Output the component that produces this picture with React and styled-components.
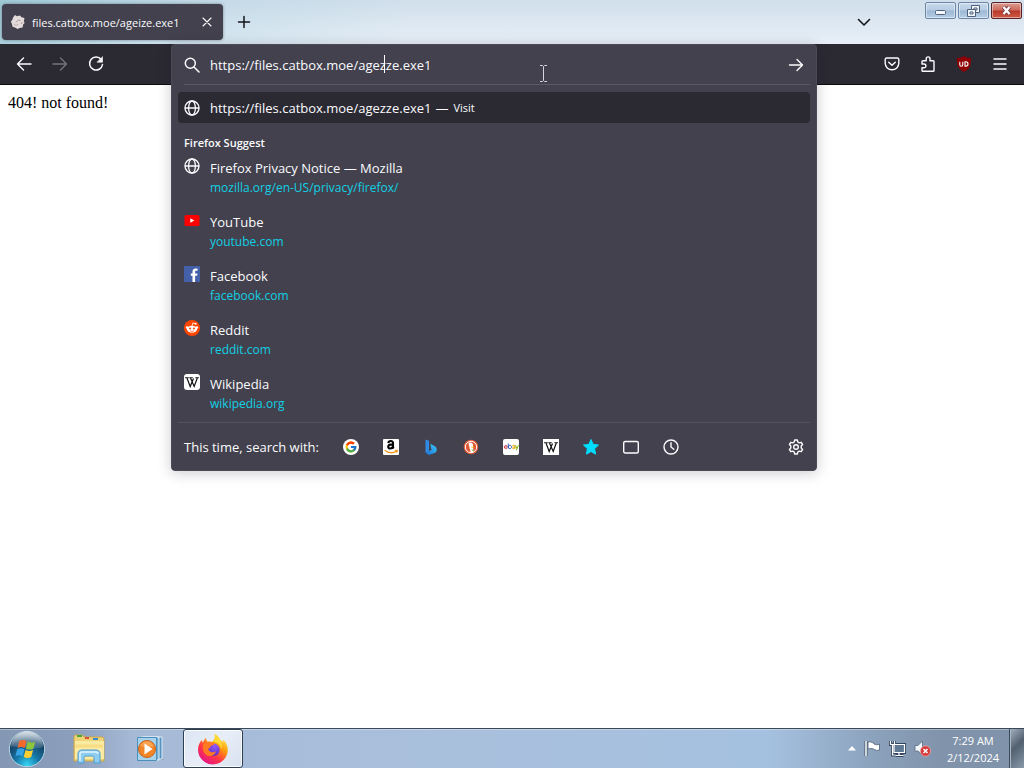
import React from "react";
import styled, { createGlobalStyle, css } from "styled-components";
import { FcGoogle } from "react-icons/fc";

const GlobalStyle = createGlobalStyle`
  *, *::before, *::after { box-sizing: border-box; }
  body { margin: 0; background: #fff; }
  button, input, a { font: inherit; color: inherit; }
  svg { display: block; flex: none; }
`;

const Desktop = styled.div`
  min-height: 100vh;
  display: flex;
  flex-direction: column;
  font-family: "Open Sans", "Noto Sans", sans-serif;
  font-size: 13px;
  color: #fbfbfe;
`;

const PlainButton = styled.button`
  display: flex;
  align-items: center;
  justify-content: center;
  padding: 0;
  border: 0;
  background: none;
`;

/* ---------- title bar ---------- */

const TitleBar = styled.header`
  height: 44px;
  display: flex;
  align-items: flex-start;
  padding: 0 2px;
  background:
    linear-gradient(90deg, rgba(120, 182, 196, 0.55), rgba(150, 200, 215, 0.2) 22%, rgba(255, 255, 255, 0) 40%),
    linear-gradient(180deg, #d0dfeb, #dce7f1 50%, #e8eff8);
`;

const Tab = styled.div`
  width: 221px;
  height: 36px;
  margin-top: 4px;
  padding: 0 8px;
  display: flex;
  align-items: center;
  gap: 6px;
  border-radius: 4px;
  background: #42414d;
  box-shadow: 0 0 3px rgba(40, 40, 60, 0.5);
  font-size: 11px;
`;

const TabTitle = styled.span`
  flex: 1;
  white-space: nowrap;
`;

const TabButton = styled(PlainButton)`
  width: 16px;
  height: 16px;
`;

const StripButton = styled(PlainButton)`
  width: 42px;
  height: 44px;
  color: #15141a;
`;

const Spacer = styled.div`
  flex: 1;
`;

const WindowControls = styled.div`
  display: flex;
  gap: 2px;
  margin-left: 40px;
  padding-top: 2px;
`;

const WindowButton = styled(PlainButton)`
  width: 31px;
  height: 17px;
  border: 1px solid ${(p) => (p.$danger ? "#57232b" : "#6c86a8")};
  border-radius: 2px;
  box-shadow: inset 0 0 0 1px rgba(255, 255, 255, 0.45);
  background: ${(p) =>
    p.$danger
      ? "linear-gradient(#dc9c92, #cc6a5c 48%, #b8372a 52%, #cf5b45)"
      : "linear-gradient(#c8d9ea, #b6cce2 48%, #9cb7d4 52%, #b7cee4)"};
`;

/* ---------- toolbar ---------- */

const Toolbar = styled.nav`
  height: 41px;
  display: flex;
  justify-content: space-between;
  gap: 57px;
  padding: 0 6px;
  background: #2b2a33;
  border-bottom: 1px solid #0c0c0d;
`;

const ToolGroup = styled.div`
  display: flex;
`;

const ToolButton = styled(PlainButton)`
  width: 36px;
  height: 40px;
  opacity: ${(p) => (p.disabled ? 0.35 : 1)};
`;

const UrlSlot = styled.div`
  flex: 1;
  position: relative;
`;

const UrlPanel = styled.div`
  position: absolute;
  z-index: 1;
  top: 0;
  left: 0;
  right: 0;
  background: #42414d;
  border: 1px solid #4b4a56;
  border-radius: 4px;
  box-shadow: 0 2px 14px rgba(20, 20, 40, 0.22);
`;

const InputRow = styled.div`
  position: relative;
  height: 40px;
  display: flex;
  align-items: center;
  gap: 10px;
  margin: 0 6px 0 12px;
  border-bottom: 1px solid #5a5965;
`;

const UrlInput = styled.input`
  flex: 1;
  min-width: 0;
  padding: 0;
  border: 0;
  outline: 0;
  background: none;
`;

const Caret = styled.span`
  position: absolute;
  top: 10px;
  left: 200px;
  width: 1px;
  height: 18px;
  background: #fff;
`;

const Pointer = styled.svg`
  position: absolute;
  top: 20px;
  left: 355px;
`;

const GoButton = styled(PlainButton)`
  width: 28px;
  height: 28px;
`;

const VisitRow = styled.a`
  display: flex;
  align-items: center;
  height: 31px;
  margin: 7px 6px 0;
  padding: 0 6px;
  border-radius: 4px;
  background: #2b2a33;
  text-decoration: none;
  white-space: nowrap;
`;

const VisitUrl = styled.span`
  margin: 0 4px 0 10px;
`;

const VisitHint = styled.span`
  margin-left: 5px;
  font-size: 11px;
`;

const SuggestHeading = styled.h2`
  margin: 0;
  padding: 12px 12px 0;
  font-size: 11px;
  line-height: 16px;
  font-weight: 600;
`;

const SuggestList = styled.ul`
  list-style: none;
  margin: 0;
  padding: 0 0 1px;
`;

const Suggestion = styled.a`
  display: flex;
  gap: 10px;
  height: 54px;
  padding: 7px 12px;
  text-decoration: none;
`;

const SuggestText = styled.span`
  display: flex;
  flex-direction: column;
  line-height: 20px;
`;

const SuggestUrl = styled.span`
  font-size: 12px;
  color: #12d0e4;
`;

const SearchFooter = styled.div`
  height: 48px;
  display: flex;
  align-items: center;
  margin: 0 6px;
  padding: 0 6px;
  border-top: 1px solid #52515e;
`;

const Engines = styled.div`
  display: flex;
  flex: 1;
  margin-left: 12px;
`;

const EngineButton = styled(PlainButton)`
  width: 40px;
  height: 32px;
`;

const SettingsButton = styled(PlainButton)`
  width: 16px;
  height: 32px;
`;

const FooterLabel = styled.span`
  white-space: nowrap;
`;

/* ---------- page and taskbar ---------- */

const Page = styled.main`
  flex: 1;
  padding: 8px;
  background: #fff;
  color: #000;
  font-family: "Liberation Serif", serif;
  font-size: 16px;
  line-height: 20px;
`;

const Taskbar = styled.footer`
  height: 40px;
  display: flex;
  align-items: stretch;
  border-top: 1px solid #3b4858;
  box-shadow: inset 0 1px 0 rgba(255, 255, 255, 0.35);
  background: linear-gradient(90deg, #8497b3, #8b9fbd 7%, #a6bad6 13%, #a9c0dd 45%, #a5c1e0 75%, #8ca3bd 85%, #8093aa 92%, #7f93ab);
`;

const TaskButton = styled(PlainButton)`
  width: 60px;
  height: 39px;
  margin-right: 2px;
  ${(p) =>
    p.$active &&
    css`
      border: 1px solid #2f3f52;
      border-radius: 3px;
      background: linear-gradient(135deg, #dbe5f2, #e8eef8 50%, #d8e1ef);
      box-shadow: inset 0 0 0 1px rgba(255, 255, 255, 0.8);
    `}
`;

const StartButton = styled(PlainButton)`
  width: 54px;
  margin-right: 5px;
`;

const Tray = styled.div`
  display: flex;
  align-items: center;
  gap: 8px;
`;

const Clock = styled.div`
  width: 60px;
  margin: 0 0 0 4px;
  text-align: center;
  font-size: 11px;
  line-height: 17px;
  color: #fff;
`;

const ShowDesktop = styled(PlainButton)`
  width: 15px;
  margin-left: 6px;
  border: 1px solid #3c4a5a;
  border-width: 0 0 0 1px;
  background: linear-gradient(135deg, #a3b0bf, #53616f 45%, #8999ab);
  box-shadow: inset 1px 0 0 #a8b6c5;
`;

/* ---------- icons ---------- */

const Line = ({ size = 16, w = 1.4, children, ...rest }) => (
  <svg width={size} height={size} viewBox="0 0 16 16" fill="none" stroke="currentColor"
    strokeWidth={w} strokeLinecap="round" strokeLinejoin="round" aria-hidden="true" {...rest}>
    {children}
  </svg>
);

const BackIcon = () => <Line><path d="M15 8H1.5M7.5 2 1.5 8l6 6" /></Line>;
const ForwardIcon = () => <Line><path d="M1 8h13.500M8.500 2l6 6-6 6" /></Line>;
const GoIcon = () => <Line><path d="M1.500 8h13M9 2.500 14.500 8 9 13.500" /></Line>;
const ReloadIcon = () => (
  <Line w={1.5}>
    <path d="M13.300 3.700A6.500 6.500 0 1 0 14.500 8.500" />
    <path d="M14.500 1v5.200H9.300z" fill="currentColor" strokeWidth="0.600" />
  </Line>
);
const SearchIcon = () => <Line w={1.5}><circle cx="6.300" cy="6.300" r="5" /><path d="m10 10 5 5" /></Line>;
const GlobeIcon = () => (
  <Line w={1.3}>
    <circle cx="8" cy="8" r="7" />
    <ellipse cx="8" cy="8" rx="3.400" ry="7" />
    <path d="M1.300 8h13.400" />
  </Line>
);
const CloseIcon = () => <Line w={1.1}><path d="m4 4 8 8M12 4l-8 8" /></Line>;
const PlusIcon = () => <Line w={1.5}><path d="M8 2.500v11M2.500 8h11" /></Line>;
const ChevronIcon = () => <Line w={1.6}><path d="m2.500 5.500 5.500 5.500 5.500-5.500" /></Line>;
const PocketIcon = () => (
  <Line w={1.4}>
    <path d="M2.500 2h11a1.300 1.300 0 0 1 1.300 1.300v4a6.800 6.500 0 0 1-13.600 0v-4A1.300 1.300 0 0 1 2.500 2z" />
    <path d="M4.700 6.200 8 9.300l3.300-3.100" />
  </Line>
);
const PuzzleIcon = () => (
  <Line w={1.4}>
    <path d="M2 8V5.500a.8.800 0 0 1 .8-.8h3.400V2.800a1.900 1.900 0 0 1 3.800 0v1.900h3.200a.8.800 0 0 1 .8.800v8.900a.8.800 0 0 1-.8.800H2.800a.8.800 0 0 1-.8-.8v-2.600h2a1.900 1.900 0 0 0 0-3.800z" />
  </Line>
);
const ShieldIcon = () => (
  <svg width="16" height="16" viewBox="0 0 16 16" aria-hidden="true">
    <path d="M8 0c2 1.600 4.500 2 7 2 0 7-.5 10.500-7 14C1.500 12.500 1 9 1 2c2.500 0 5-.4 7-2z" fill="#8f0005" />
    <path d="M3.800 5.700v3a1.500 1.500 0 0 0 3 0v-3M9 5.700v4.400h.8a2.200 2.200 0 0 0 0-4.400z" fill="none" stroke="#fff" strokeWidth="1.100" />
  </svg>
);
const MenuIcon = () => <Line w={1.4}><path d="M2 3h12M2 8h12M2 13h12" /></Line>;
const HistoryIcon = () => <Line w={1.4}><circle cx="8" cy="8" r="7" /><path d="M8 3.800V8l2.800 2.300" /></Line>;
const TabsIcon = () => <Line w={1.4}><rect x="0.700" y="2.500" width="14.600" height="11.500" rx="1.500" /></Line>;
const GearIcon = () => (
  <Line w={1.4}>
    <path d="M6.700 1h2.600l.5 2 1.500.9 2-.6 1.300 2.300L13.200 7v2l1.400 1.400-1.300 2.300-2-.6-1.500.9-.5 2H6.700l-.5-2-1.500-.9-2 .6-1.300-2.300L2.800 9V7L1.400 5.600l1.300-2.300 2 .6 1.500-.9z" />
    <circle cx="8" cy="8" r="2.300" />
  </Line>
);
const StarIcon = () => (
  <svg width="16" height="16" viewBox="0 0 16 16" aria-hidden="true">
    <path d="m8 .5 2.200 4.900 5.300.6-3.900 3.700 1 5.500L8 12.500l-4.600 2.700 1-5.500L.5 6l5.300-.6z" fill="#00ddff" stroke="#00ddff" strokeLinejoin="round" />
  </svg>
);
const CatboxIcon = () => (
  <svg width="16" height="16" viewBox="0 0 16 16" aria-hidden="true">
    <path d="M3 3.500 5 1l2 1.300 3-.8 1.500 1.800 3 .7-.7 3 .8 2-1.500 1.500-.5 3-3 .5L7.500 15 5 13.500l-2.500-.8L2 10 .8 7.500 2.300 6z" fill="#e4dcda" />
    <path d="M6 8.500 8.500 6l2 .500M11 10l1.500-2" stroke="#a4969a" fill="none" />
    <path d="m4 10 2 1.500L8.500 10" stroke="#b9acaf" fill="none" />
  </svg>
);
const YouTubeIcon = () => (
  <svg width="16" height="16" viewBox="0 0 16 16" aria-hidden="true">
    <rect x="0.500" y="3" width="15" height="11" rx="1.500" fill="#f00" />
    <path d="m6.300 6.200 4 2.300-4 2.300z" fill="#fff" />
  </svg>
);
const FacebookIcon = () => (
  <svg width="16" height="16" viewBox="0 0 16 16" aria-hidden="true">
    <path d="M0 0h16v16H0z" fill="#4460a8" />
    <path d="M8.500 16V9.800H6.800V7.400h1.700V5.700C8.500 3.600 9.700 2.500 11.700 2.500h1.800v2.200h-1.300c-.8 0-1.100.4-1.100 1.100v1.600h2.400l-.4 2.400h-2V16z" fill="#fff" />
  </svg>
);
const RedditIcon = () => (
  <svg width="16" height="16" viewBox="0 0 16 16" aria-hidden="true">
    <circle cx="8" cy="8" r="8" fill="#ff4500" />
    <path d="m8 6 .8-3 2.400.6" stroke="#fff" fill="none" strokeWidth="0.800" />
    <circle cx="11.600" cy="3.700" r="1" fill="#fff" />
    <circle cx="3.200" cy="7.600" r="1.300" fill="#fff" /><circle cx="12.800" cy="7.600" r="1.300" fill="#fff" />
    <ellipse cx="8" cy="9.200" rx="5" ry="3.500" fill="#fff" />
    <circle cx="6.100" cy="8.500" r="1" fill="#ff4500" /><circle cx="9.900" cy="8.500" r="1" fill="#ff4500" />
    <path d="M6 10.800c1 .8 3 .8 4 0" stroke="#ff4500" fill="none" strokeWidth="0.700" />
  </svg>
);
const WikipediaIcon = ({ r = 3 }) => (
  <svg width="16" height="16" viewBox="0 0 16 16" aria-hidden="true">
    <rect width="16" height="16" rx={r} fill="#fff" />
    <path d="m3 4 3.200 8.500L9.500 4.500M6.500 4l3.700 8.500L13.300 4" fill="none" stroke="#111" strokeWidth="1.200" />
    <path d="M1 3.700h3.800M5.300 3.700h3.500M11.300 3.700H15" stroke="#111" strokeWidth="0.900" />
  </svg>
);
const GoogleIcon = () => (
  <svg width="16" height="16" viewBox="0 0 16 16" aria-hidden="true">
    <circle cx="8" cy="8" r="8" fill="#fff" />
    <FcGoogle x="1.500" y="1.500" width="13" height="13" />
  </svg>
);
const AmazonIcon = () => (
  <svg width="16" height="16" viewBox="0 0 16 16" aria-hidden="true">
    <rect width="16" height="16" rx="1" fill="#fff" />
    <path d="M5.300 4.200C5.700 1.300 10 1.400 10 4v4c0 .8.300 1 .7 1.500M10 5.400c-3 0-4.800.6-4.800 2.400 0 2.500 4 2.200 4.800-.6" fill="none" stroke="#000" strokeWidth="2.100" />
    <path d="M1.700 11.300c3.500 2.800 8.300 2.900 12 .8M12 11.300h2.300c0 .8-.2 1.600-.8 2.200" fill="none" stroke="#f7981d" strokeWidth="1.300" />
  </svg>
);
const BingIcon = () => (
  <svg width="16" height="16" viewBox="0 0 16 16" aria-hidden="true">
    <defs>
      <linearGradient id="bing-bowl" x1="0" y1="1" x2="1" y2="0">
        <stop stopColor="#1b70d8" /><stop offset="1" stopColor="#3fc8f5" />
      </linearGradient>
    </defs>
    <path d="m2.500 .5 3.500 1.200v10.500L2.500 13.800z" fill="#2f8be6" />
    <path d="m7.300 4.800 4.700 2.400c2.300 1.700 2.300 5 .3 6.500L6 16l-3.500-2.200 6.500-3.300-1-.8z" fill="url(#bing-bowl)" />
  </svg>
);
const DuckIcon = () => (
  <svg width="16" height="16" viewBox="0 0 16 16" aria-hidden="true">
    <circle cx="8" cy="8" r="7.300" fill="#de5833" />
    <circle cx="8" cy="8" r="5.700" fill="#de5833" stroke="#fff" />
    <path d="M5.500 4.500C6 2.800 9.800 3 10 6l.4 7-2.700.5z" fill="#fff" />
    <path d="m8 7.500 3.500.5-2.500 1z" fill="#fdd20a" /><path d="m8 10.500 2.700.3-.5 1.500z" fill="#65bc46" />
  </svg>
);
const EbayIcon = () => (
  <svg width="16" height="16" viewBox="0 0 16 16" fill="none" strokeWidth="1" aria-hidden="true">
    <rect width="16" height="16" rx="2" fill="#fff" />
    <path d="M1.300 8h3C4.300 5.800 1.300 5.900 1.300 8c0 2 2.300 2.100 3 1" stroke="#d43a48" />
    <path d="M5.300 4.500v5M5.300 8c0-2.200 3.200-2.200 3.200 0s-3.200 2-3.200 0" stroke="#2c5cb8" />
    <path d="M9.300 6.900c.7-.9 2.700-.7 2.700.5v2.300M12 8c-3-.2-3 1.700-1.500 1.700.8 0 1.500-.6 1.500-1.200" stroke="#e8a900" />
    <path d="m12.400 6.200 1.500 3.300M15.500 6.200l-2.200 5" stroke="#83b51e" />
  </svg>
);

const MinimizeGlyph = () => (
  <svg width="13" height="11" viewBox="0 0 13 11" aria-hidden="true">
    <rect x="1.500" y="5.500" width="10" height="4" rx="1" fill="#f3f6fa" stroke="#50627b" />
  </svg>
);
const RestoreGlyph = () => (
  <svg width="13" height="12" viewBox="0 0 13 12" fill="#eff4fa" stroke="#50627b" aria-hidden="true">
    <path d="M4.500.5h8v7h-8z" /><path d="M7 3h3v2H7z" />
    <path d="M.5 4.500h8v7h-8z" /><path d="M3 7h3v2H3z" />
  </svg>
);
const CloseGlyph = () => (
  <svg width="13" height="11" viewBox="0 0 13 11" aria-hidden="true">
    <path d="m3.500 2 6 7M9.500 2l-6 7" stroke="#6a3440" strokeWidth="4" />
    <path d="m3.500 2 6 7M9.500 2l-6 7" stroke="#fff" strokeWidth="2.400" />
  </svg>
);

const WindowsOrb = () => (
  <svg width="38" height="38" viewBox="0 0 38 38" aria-hidden="true">
    <defs>
      <radialGradient id="orb" cx="0.500" cy="0.950" r="0.850">
        <stop stopColor="#35d5f4" /><stop offset="0.400" stopColor="#1677a8" /><stop offset="0.800" stopColor="#174265" /><stop offset="1" stopColor="#5c7993" />
      </radialGradient>
      <linearGradient id="orb-gloss" x1="0" y1="0" x2="0" y2="1">
        <stop stopColor="#fff" stopOpacity="0.750" /><stop offset="1" stopColor="#cfe2ef" stopOpacity="0.150" />
      </linearGradient>
    </defs>
    <circle cx="19" cy="19" r="17.700" fill="url(#orb)" stroke="#b5d5e4" />
    <path d="M3 17A16 15.500 0 0 1 35 17c-9 4-23-2-32 0z" fill="url(#orb-gloss)" />
    <path d="M11.300 11c2.500-1.500 5-1.400 7.200 0l-1.800 7c-2.300-1.300-4.700-1.300-7.200 0z" fill="#f36a2c" />
    <path d="M19.700 11.600c2.600 1.300 4.900 1.300 7.600.1l-1.900 7c-2.600 1.200-5 1.200-7.500 0z" fill="#8bc63e" />
    <path d="M9.200 19.300c2.500-1.300 5-1.300 7.200 0l-1.800 7c-2.300-1.400-4.700-1.400-7.200 0z" fill="#37a3e5" />
    <path d="M17.600 20c2.600 1.200 4.900 1.200 7.500 0l-1.900 7c-2.600 1.200-5 1.200-7.500 0z" fill="#ffcf32" />
  </svg>
);
const ExplorerIcon = () => (
  <svg width="34" height="32" viewBox="0 0 34 32" aria-hidden="true">
    <path d="M2 4c0-1 .5-2 1.500-2h7l1.500 2h18c1 0 2 .8 2 2v22H2z" fill="#efd477" stroke="#c8a54a" />
    <path d="M3 8h29v18H3z" fill="#fbeaa2" /><path d="M3 13h28" stroke="#f7dc84" strokeWidth="3" />
    <path d="M5 3h5" stroke="#46a83f" strokeWidth="2" /><path d="M13 5h4" stroke="#d75136" strokeWidth="2" /><path d="M21 6h5" stroke="#3b87d0" strokeWidth="2" />
    <path d="M6 30v-9c0-2.500 1.500-4 4-4h14c2.500 0 4 1.500 4 4v9h-6v-5c0-1-.5-2-2-2h-6c-1.500 0-2 1-2 2v5z" fill="#8fcdf0" stroke="#4d9bd0" />
    <path d="M8 28v-7c0-1.500 1-2 2-2h14c1 0 2 .5 2 2" fill="none" stroke="#e1f5fd" strokeWidth="1.500" />
  </svg>
);
const MediaIcon = () => (
  <svg width="30" height="28" viewBox="0 0 30 28" aria-hidden="true">
    <path d="m8 24 20 1-5-4z" fill="#5d7186" opacity="0.450" />
    <path d="M8 2h18v22H8z" fill="#5793bf" stroke="#dcebf7" />
    <path d="M5 2h18v23H5z" fill="#72add2" stroke="#e5f1fa" />
    <path d="M1.500 2.500h19v23h-19z" fill="#a7d2ec" stroke="#4b90bd" />
    <circle cx="11" cy="14" r="8.500" fill="#f28525" stroke="#c65f16" />
    <path d="M4 11a7.500 7.500 0 0 1 14 0c-5 3-9 1-14 0z" fill="#ffb56e" opacity="0.600" />
    <path d="m8.500 8.500 8 5.500-8 5.500z" fill="#fff" />
  </svg>
);
const FirefoxIcon = () => (
  <svg width="32" height="32" viewBox="0 0 32 32" aria-hidden="true">
    <defs>
      <linearGradient id="fox-body" x1="0.850" y1="0.050" x2="0.200" y2="0.950">
        <stop stopColor="#fff44f" /><stop offset="0.350" stopColor="#ff980e" /><stop offset="0.650" stopColor="#ff3647" /><stop offset="1" stopColor="#e31587" />
      </linearGradient>
      <radialGradient id="fox-globe" cx="0.600" cy="0.200" r="0.900">
        <stop stopColor="#9059ff" /><stop offset="1" stopColor="#5b2bb5" />
      </radialGradient>
    </defs>
    <path d="M17.500 1c3 1.500 5 4 5.700 6.200 1.500.3 2.600 1.500 3.300 2.700-.2-1.500-.6-2.700-1.200-3.700 3.500 2.200 5.500 6.400 5.500 10.800A15 15 0 0 1 16 31.500 15 15 0 0 1 1 17c0-4 1.400-7.500 3.800-10 .2 1.200.5 2 1.200 2.700C6.500 7.700 7.600 6 9.200 5c-.1 1.500.3 2.700 1.300 3.700 1.500-.3 3.300-.2 4.500.3C17.500 7.300 18.500 4 17.500 1z" fill="url(#fox-body)" />
    <circle cx="16.500" cy="16.800" r="6.200" fill="url(#fox-globe)" />
    <path d="M6 12c2-2.800 5-3.600 8-2.400 1.500.2 2.500.7 3.200 1.800-.9.600-1.900.8-3.100 1-.6 2-1.900 2.700-3 3.500 1.400 3.600 5 4.300 7.800 2.300-1 4.600-6.300 6.300-10.200 3.300C6.200 19.600 5.300 15.500 6 12z" fill="#ff7a22" />
    <path d="M17.500 1c1 3 .4 6-1.500 8 4.800-.3 8.500 3.300 8 8 1.800-4.500.5-8-1-9.800C22.500 5 20.500 2.500 17.500 1z" fill="#ffda35" />
  </svg>
);
const TrayArrow = () => (
  <svg width="8" height="5" viewBox="0 0 8 5" aria-hidden="true"><path d="M0 4.500 4 0l4 4.500z" fill="#fff" /></svg>
);
const FlagIcon = () => (
  <svg width="17" height="17" viewBox="0 0 17 17" aria-hidden="true">
    <path d="M2 1v15" stroke="#40536a" strokeWidth="3" /><path d="M4 2c3-1 4 1 6 1v1c2 1 3.500 1 5.500 0v6c-3 1-4 0-6-1-2-.7-3.500-.7-5.500 0z" fill="#fff" stroke="#4b5e74" strokeWidth="0.800" />
    <path d="M2 1v15" stroke="#fff" strokeWidth="1.500" />
  </svg>
);
const NetworkIcon = () => (
  <svg width="17" height="17" viewBox="0 0 17 17" fill="none" aria-hidden="true">
    <path d="M5 4.500h10.500v8H5zM10 13v2M6.500 15.500h8M1.500 1v3.500h4V1M3.500 5v10h2" stroke="#34465d" strokeWidth="3" />
    <path d="M5 4.500h10.500v8H5z" fill="#5f7893" />
    <path d="M5 4.500h10.500v8H5zM10 13v2M6.500 15.500h8M1.500 1v3.500h4V1M3.500 5v10h2" stroke="#fff" strokeWidth="1.200" />
  </svg>
);
const MutedIcon = () => (
  <svg width="17" height="17" viewBox="0 0 17 17" aria-hidden="true">
    <path d="M1 5.500h3L8.500 1v14L4 11H1z" fill="#f4f7fa" stroke="#566b83" strokeWidth="0.800" />
    <circle cx="11.500" cy="11" r="5.200" fill="#d63a3a" stroke="#f0b6b6" strokeWidth="0.700" />
    <path d="m9.500 9 4 4M13.500 9l-4 4" stroke="#fff" strokeWidth="1.600" />
  </svg>
);

/* ---------- data ---------- */

const TYPED_URL = "https://files.catbox.moe/agezze.exe1";

const suggestions = [
  { title: "Firefox Privacy Notice — Mozilla", url: "mozilla.org/en-US/privacy/firefox/", Icon: GlobeIcon },
  { title: "YouTube", url: "youtube.com", Icon: YouTubeIcon },
  { title: "Facebook", url: "facebook.com", Icon: FacebookIcon },
  { title: "Reddit", url: "reddit.com", Icon: RedditIcon },
  { title: "Wikipedia", url: "wikipedia.org", Icon: WikipediaIcon },
];

const SquareWikipedia = () => <WikipediaIcon r={0} />;

const engines = [
  ["Google", GoogleIcon], ["Amazon", AmazonIcon], ["Bing", BingIcon],
  ["DuckDuckGo", DuckIcon], ["eBay", EbayIcon], ["Wikipedia", SquareWikipedia],
  ["Bookmarks", StarIcon], ["Tabs", TabsIcon], ["History", HistoryIcon],
];

function UrlBar() {
  return (
    <UrlSlot>
      <UrlPanel>
        <InputRow>
          <SearchIcon />
          <UrlInput aria-label="Search or enter address" defaultValue={TYPED_URL} spellCheck={false} />
          <GoButton aria-label="Go"><GoIcon /></GoButton>
          <Caret />
          <Pointer width="9" height="17" viewBox="0 0 9 17" fill="none" stroke="#d5d4dc" aria-hidden="true">
            <path d="M1 .5h2.500l1 1 1-1H8M4.500 1.500v14M1 16.500h2.500l1-1 1 1H8" />
          </Pointer>
        </InputRow>
        <VisitRow href="#visit">
          <GlobeIcon />
          <VisitUrl>{TYPED_URL}</VisitUrl>
          <span>—</span>
          <VisitHint>Visit</VisitHint>
        </VisitRow>
        <SuggestHeading>Firefox Suggest</SuggestHeading>
        <SuggestList>
          {suggestions.map(({ title, url, Icon }) => (
            <li key={url}>
              <Suggestion href={`#${url}`}>
                <Icon />
                <SuggestText>
                  <span>{title}</span>
                  <SuggestUrl>{url}</SuggestUrl>
                </SuggestText>
              </Suggestion>
            </li>
          ))}
        </SuggestList>
        <SearchFooter>
          <FooterLabel>This time, search with:</FooterLabel>
          <Engines>
            {engines.map(([name, Icon]) => (
              <EngineButton key={name} aria-label={name}><Icon /></EngineButton>
            ))}
          </Engines>
          <SettingsButton aria-label="Search settings"><GearIcon /></SettingsButton>
        </SearchFooter>
      </UrlPanel>
    </UrlSlot>
  );
}

export default function App() {
  return (
    <Desktop>
      <GlobalStyle />
      <TitleBar>
        <Tab>
          <CatboxIcon />
          <TabTitle>files.catbox.moe/ageize.exe1</TabTitle>
          <TabButton aria-label="Close tab"><CloseIcon /></TabButton>
        </Tab>
        <StripButton aria-label="New tab"><PlusIcon /></StripButton>
        <Spacer />
        <StripButton aria-label="List all tabs"><ChevronIcon /></StripButton>
        <WindowControls>
          <WindowButton aria-label="Minimize"><MinimizeGlyph /></WindowButton>
          <WindowButton aria-label="Restore"><RestoreGlyph /></WindowButton>
          <WindowButton aria-label="Close" $danger><CloseGlyph /></WindowButton>
        </WindowControls>
      </TitleBar>
      <Toolbar>
        <ToolGroup>
          <ToolButton aria-label="Back"><BackIcon /></ToolButton>
          <ToolButton aria-label="Forward" disabled><ForwardIcon /></ToolButton>
          <ToolButton aria-label="Reload"><ReloadIcon /></ToolButton>
        </ToolGroup>
        <UrlBar />
        <ToolGroup>
          <ToolButton aria-label="Pocket"><PocketIcon /></ToolButton>
          <ToolButton aria-label="Extensions"><PuzzleIcon /></ToolButton>
          <ToolButton aria-label="uBlock Origin"><ShieldIcon /></ToolButton>
          <ToolButton aria-label="Menu"><MenuIcon /></ToolButton>
        </ToolGroup>
      </Toolbar>
      <Page>404! not found!</Page>
      <Taskbar>
        <StartButton aria-label="Start"><WindowsOrb /></StartButton>
        <TaskButton aria-label="Explorer"><ExplorerIcon /></TaskButton>
        <TaskButton aria-label="Media Player"><MediaIcon /></TaskButton>
        <TaskButton aria-label="Firefox" $active><FirefoxIcon /></TaskButton>
        <Spacer />
        <Tray>
          <TrayArrow />
          <FlagIcon />
          <NetworkIcon />
          <MutedIcon />
          <Clock>
            <div>7:29 AM</div>
            <div>2/12/2024</div>
          </Clock>
        </Tray>
        <ShowDesktop aria-label="Show desktop" />
      </Taskbar>
    </Desktop>
  );
}
